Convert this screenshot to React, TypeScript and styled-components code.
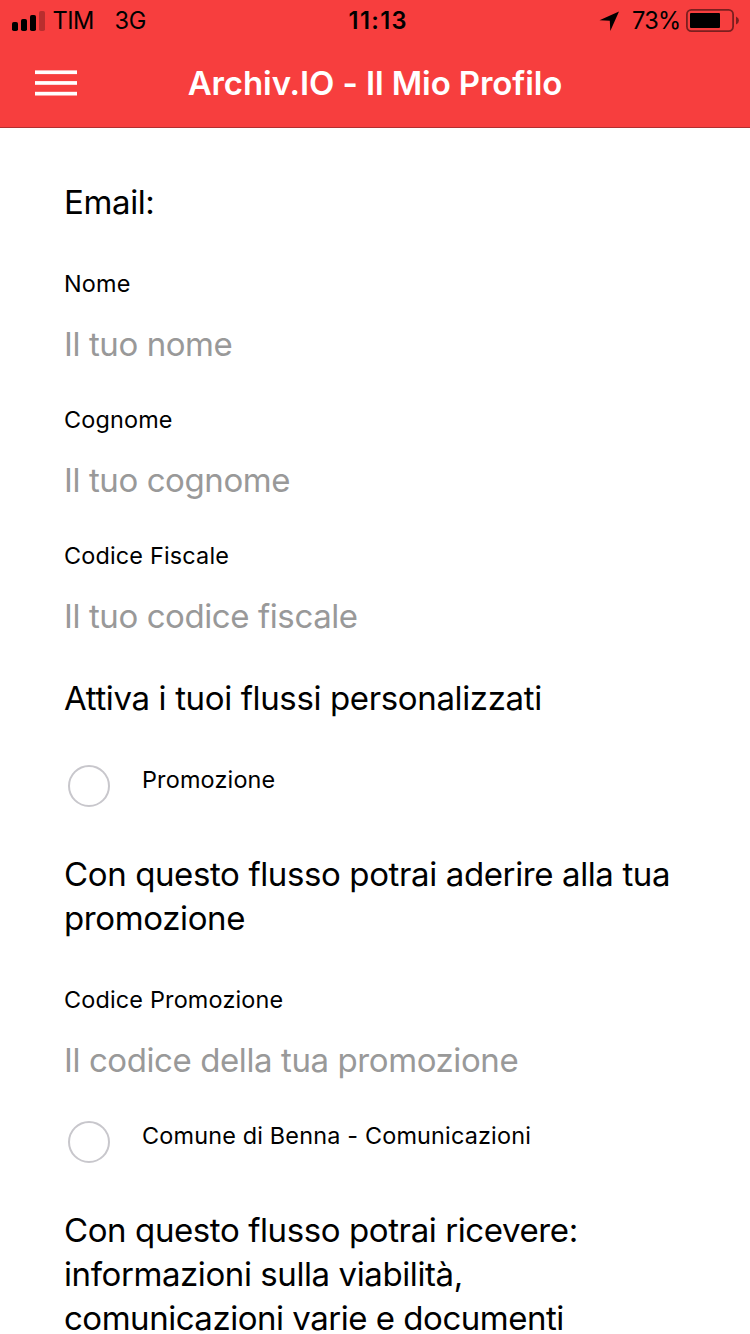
import React from "react";
import styled, { createGlobalStyle } from "styled-components";

const GlobalStyle = createGlobalStyle`
  *, *::before, *::after { box-sizing: border-box; }
  html, body { margin: 0; background: #fff; }
  body {
    font-family: Inter, "Liberation Sans", sans-serif;
    color: #000;
    -webkit-font-smoothing: antialiased;
  }
`;

const Screen = styled.div`
  width: 750px;
  height: 1334px;
  overflow: hidden;
  display: flex;
  flex-direction: column;
  background: #fff;
`;

const Header = styled.header`
  flex: none;
  height: 128px;
  background: #f73e3e;
  border-bottom: 1px solid #b22f30;
`;

const StatusBar = styled.div`
  height: 40px;
  display: grid;
  grid-template-columns: 1fr auto 1fr;
  align-items: center;
  padding: 0 11px 0 12px;
  font-size: 23.6px;
  line-height: 40px;
`;

const StatusGroup = styled.div<{ $end?: boolean }>`
  display: flex;
  align-items: center;
  justify-content: ${(p) => (p.$end ? "flex-end" : "flex-start")};
`;

const StatusText = styled.span<{ $track?: number; $left?: number; $bold?: boolean }>`
  display: block;
  white-space: nowrap;
  padding-top: 1px;
  margin-left: ${(p) => p.$left ?? 0}px;
  letter-spacing: ${(p) => p.$track ?? 0}px;
  font-weight: ${(p) => (p.$bold ? 600 : 400)};
`;

const StatusIcon = styled.svg<{ $left?: number }>`
  display: block;
  flex: none;
  margin-left: ${(p) => p.$left ?? 0}px;
`;

const NavBar = styled.div`
  height: 86px;
  display: grid;
  grid-template-columns: 77px 1fr 77px;
  align-items: center;
`;

const MenuIcon = styled.svg`
  display: block;
`;

const MenuButton = styled.button`
  margin: 0 0 0 35px;
  padding: 0;
  border: 0;
  background: none;
`;

const Title = styled.h1`
  margin: 0;
  text-align: center;
  font-size: 33px;
  line-height: 44px;
  font-weight: 600;
  color: #fff;
  letter-spacing: -0.1px;
`;

const Form = styled.main`
  display: flex;
  flex-direction: column;
  padding: 52px 64px 0;
`;

const Paragraph = styled.p`
  margin: 0 0 44px;
  font-size: 33px;
  line-height: 44px;
`;

const Line = styled.span<{ $track?: number }>`
  display: block;
  white-space: nowrap;
  letter-spacing: ${(p) => p.$track ?? -0.38}px;
`;

const Field = styled.label`
  display: flex;
  flex-direction: column;
  gap: 22px;
  margin-bottom: 38px;
`;

const Caption = styled.span`
  font-size: 23.4px;
  line-height: 32px;
  letter-spacing: 0.18px;
  white-space: nowrap;
`;

const Input = styled.input`
  height: 44px;
  padding: 0;
  border: 0;
  outline: 0;
  background: none;
  font: inherit;
  font-size: 33px;
  line-height: 44px;
  letter-spacing: -0.41px;
  &::placeholder { color: #999; opacity: 1; }
`;

const Option = styled.label`
  display: flex;
  align-items: flex-start;
  height: 44px;
  margin-bottom: 44px;
`;

const Radio = styled.span`
  flex: none;
  width: 42px;
  height: 42px;
  margin: 1px 32px 0 4px;
  border: 2px solid #c8c7cc;
  border-radius: 50%;
`;

function TextField(props: { label: string; hint: string }) {
  return (
    <Field>
      <Caption>{props.label}</Caption>
      <Input placeholder={props.hint} />
    </Field>
  );
}

function Choice(props: { label: string }) {
  return (
    <Option>
      <Radio />
      <Caption>{props.label}</Caption>
    </Option>
  );
}

export default function App() {
  return (
    <Screen>
      <GlobalStyle />
      <Header>
        <StatusBar>
          <StatusGroup>
            <StatusIcon width="33" height="20" viewBox="0 0 33 20">
              <rect x="0" y="11" width="6" height="9" rx="1.8" />
              <rect x="9" y="8" width="6" height="12" rx="1.8" />
              <rect x="18" y="4" width="6" height="16" rx="1.8" />
              <rect x="27" y="0" width="6" height="20" rx="1.8" opacity="0.25" />
            </StatusIcon>
            <StatusText $left={7.5} $track={-0.5}>TIM</StatusText>
            <StatusText $left={20.5} $track={-0.1}>3G</StatusText>
          </StatusGroup>
          <StatusText $bold $track={1.4} $left={5.5}>11:13</StatusText>
          <StatusGroup $end>
            <StatusIcon width="20" height="20" viewBox="0 0 20 20">
              <path d="M20 0.5 11.3 20 10.8 9.8 0.5 9.2Z" />
            </StatusIcon>
            <StatusText $left={12.8} $track={-0.8}>73%</StatusText>
            <StatusIcon $left={5.6} width="53" height="23" viewBox="0 0 53 23">
              <rect x="0.9" y="0.9" width="46.2" height="21.2" rx="4.5" fill="none" stroke="#000" strokeOpacity="0.5" strokeWidth="1.8" />
              <rect x="4" y="4" width="30" height="15" rx="1" />
              <path d="M50 7.5Q53 9 53 11.5T50 15.5Z" opacity="0.5" />
            </StatusIcon>
          </StatusGroup>
        </StatusBar>
        <NavBar>
          <MenuButton aria-label="Menu">
            <MenuIcon width="42" height="26" viewBox="0 0 42 26" fill="#fff">
              <rect y="0.4" width="42" height="3.7" />
              <rect y="11.1" width="42" height="3.7" />
              <rect y="21.8" width="42" height="3.7" />
            </MenuIcon>
          </MenuButton>
          <Title>Archiv.IO - Il Mio Profilo</Title>
        </NavBar>
      </Header>
      <Form>
        <Paragraph>
          <Line>Email:</Line>
        </Paragraph>
        <TextField label="Nome" hint="Il tuo nome" />
        <TextField label="Cognome" hint="Il tuo cognome" />
        <TextField label="Codice Fiscale" hint="Il tuo codice fiscale" />
        <Paragraph>
          <Line $track={-0.36}>Attiva i tuoi flussi personalizzati</Line>
        </Paragraph>
        <Choice label="Promozione" />
        <Paragraph>
          <Line>Con questo flusso potrai aderire alla tua</Line>
          <Line>promozione</Line>
        </Paragraph>
        <TextField label="Codice Promozione" hint="Il codice della tua promozione" />
        <Choice label="Comune di Benna - Comunicazioni" />
        <Paragraph>
          <Line $track={-0.4}>Con questo flusso potrai ricevere:</Line>
          <Line $track={-0.41}>informazioni sulla viabilità,</Line>
          <Line $track={-0.48}>comunicazioni varie e documenti</Line>
        </Paragraph>
      </Form>
    </Screen>
  );
}
